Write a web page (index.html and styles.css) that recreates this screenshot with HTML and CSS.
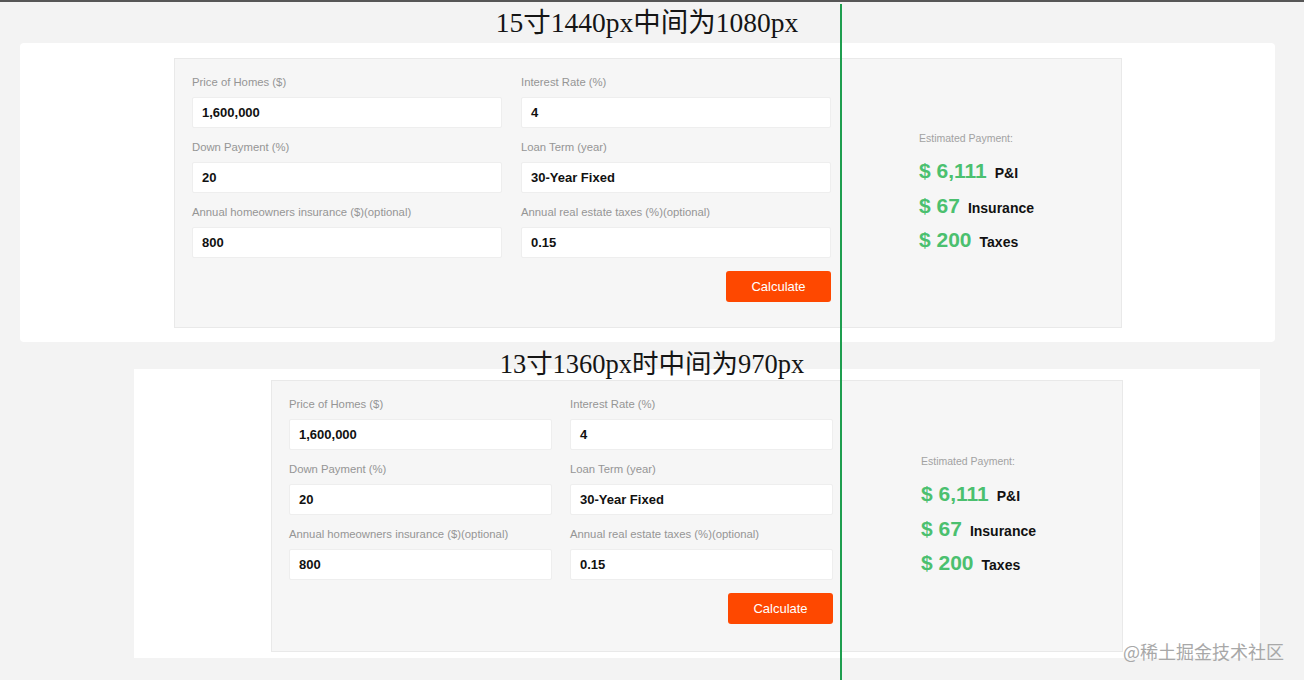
FILE: index.html
```html
<!DOCTYPE html>
<html lang="zh">
<head>
<meta charset="utf-8">
<title>Mortgage calculator layout comparison</title>
<link rel="stylesheet" href="styles.css">
</head>
<body>
<div class="topline"></div>
<div class="page">
  <h1 class="title title-one">15寸1440px中间为1080px</h1>
  <section class="panel panel-one">
    <div class="card card-one">
      <form class="form">
        <div class="field"><label class="label">Price of Homes ($)</label><div class="input">1,600,000</div></div>
        <div class="field"><label class="label">Interest Rate (%)</label><div class="input">4</div></div>
        <div class="field"><label class="label">Down Payment (%)</label><div class="input">20</div></div>
        <div class="field"><label class="label">Loan Term (year)</label><div class="input">30-Year Fixed</div></div>
        <div class="field"><label class="label">Annual homeowners insurance ($)(optional)</label><div class="input">800</div></div>
        <div class="field"><label class="label">Annual real estate taxes (%)(optional)</label><div class="input">0.15</div></div>
        <div class="actions"><button type="button" class="btn">Calculate</button></div>
      </form>
      <div class="results">
        <div class="est">Estimated Payment:</div>
        <div class="row"><span class="amt">$ 6,111</span><span class="kind">P&amp;I</span></div>
        <div class="row"><span class="amt">$ 67</span><span class="kind">Insurance</span></div>
        <div class="row"><span class="amt">$ 200</span><span class="kind">Taxes</span></div>
      </div>
    </div>
  </section>
  <h1 class="title title-two">13寸1360px时中间为970px</h1>
  <section class="panel panel-two">
    <div class="card card-two">
      <form class="form">
        <div class="field"><label class="label">Price of Homes ($)</label><div class="input">1,600,000</div></div>
        <div class="field"><label class="label">Interest Rate (%)</label><div class="input">4</div></div>
        <div class="field"><label class="label">Down Payment (%)</label><div class="input">20</div></div>
        <div class="field"><label class="label">Loan Term (year)</label><div class="input">30-Year Fixed</div></div>
        <div class="field"><label class="label">Annual homeowners insurance ($)(optional)</label><div class="input">800</div></div>
        <div class="field"><label class="label">Annual real estate taxes (%)(optional)</label><div class="input">0.15</div></div>
        <div class="actions"><button type="button" class="btn">Calculate</button></div>
      </form>
      <div class="results">
        <div class="est">Estimated Payment:</div>
        <div class="row"><span class="amt">$ 6,111</span><span class="kind">P&amp;I</span></div>
        <div class="row"><span class="amt">$ 67</span><span class="kind">Insurance</span></div>
        <div class="row"><span class="amt">$ 200</span><span class="kind">Taxes</span></div>
      </div>
    </div>
  </section>
</div>
<div class="guide"></div>
<div class="watermark">@稀土掘金技术社区</div>
</body>
</html>
```

FILE: styles.css
```css
* { box-sizing: border-box; }
html, body { margin: 0; padding: 0; }
body {
  width: 1304px;
  height: 680px;
  overflow: hidden;
  background: #f3f3f3;
  font-family: "Liberation Sans", Arial, sans-serif;
  position: relative;
}
.topline { height: 2px; background: #565656; }
.page { display: block; }
.title {
  margin: 0;
  text-align: center;
  font-family: "Liberation Serif", "Noto Sans CJK SC", serif;
  font-weight: normal;
  color: #151515;
  padding-right: 10px;
}
.title-one { height: 41px; line-height: 41px; font-size: 27.5px; }
.title-two { height: 44px; line-height: 44px; font-size: 26.5px; margin-bottom: -17px; padding-right: 0; }
.panel { background: #fff; display: flex; align-items: flex-start; }
.panel-one {
  margin-left: 20px; width: 1255px; height: 299px;
  padding: 15px 0 0 154px; border-radius: 4px;
}
.panel-two {
  margin-left: 134px; width: 1126px; height: 289px;
  padding: 11px 0 0 137px;
}
.card {
  background: #f6f6f6;
  border: 1px solid #e9e9e9;
  display: flex;
  padding: 16px 0 0 17px;
}
.card-one { width: 948px; height: 270px; }
.card-two { width: 852px; height: 272px; }
.form { display: grid; column-gap: 19px; row-gap: 12px; align-content: start; }
.card-one .form { grid-template-columns: 310px 310px; }
.card-two .form { grid-template-columns: 263px 263px; column-gap: 18px; }
.field { display: flex; flex-direction: column; }
.label { font-size: 11.3px; line-height: 15px; color: #959595; margin-bottom: 7px; white-space: nowrap; }
.input {
  height: 31px;
  background: #fff;
  border: 1px solid #eeeeee;
  border-radius: 2px;
  padding-left: 9px;
  font-size: 13px;
  font-weight: bold;
  line-height: 29px;
  color: #111;
}
.actions { grid-column: 2; display: flex; justify-content: flex-end; margin-top: 1px; }
.btn {
  width: 105px; height: 31px;
  background: #fe4800;
  border: none;
  border-radius: 3px;
  color: #fff;
  font-family: "Liberation Sans", Arial, sans-serif;
  font-size: 13px;
  padding: 0;
}
.results {
  margin-left: 88px;
  align-self: center;
  display: flex;
  flex-direction: column;
  margin-top: -13px;
}
.est { font-size: 10.5px; line-height: 14px; color: #a2a2a2; margin-bottom: 9px; }
.row { line-height: 34.5px; height: 34.5px; white-space: nowrap; }
.amt { font-size: 21px; font-weight: bold; color: #4bc06f; }
.kind { font-size: 14px; font-weight: bold; color: #111; margin-left: 8px; }
.guide {
  position: absolute;
  left: 840px; top: 4px;
  width: 2px; height: 676px;
  background: #1e9e4f;
}
.watermark {
  position: absolute;
  left: 1123px; top: 639px;
  font-family: "Noto Sans CJK SC", sans-serif;
  font-size: 18px;
  line-height: 24px;
  color: #a8a8a8;
  white-space: nowrap;
}
```
